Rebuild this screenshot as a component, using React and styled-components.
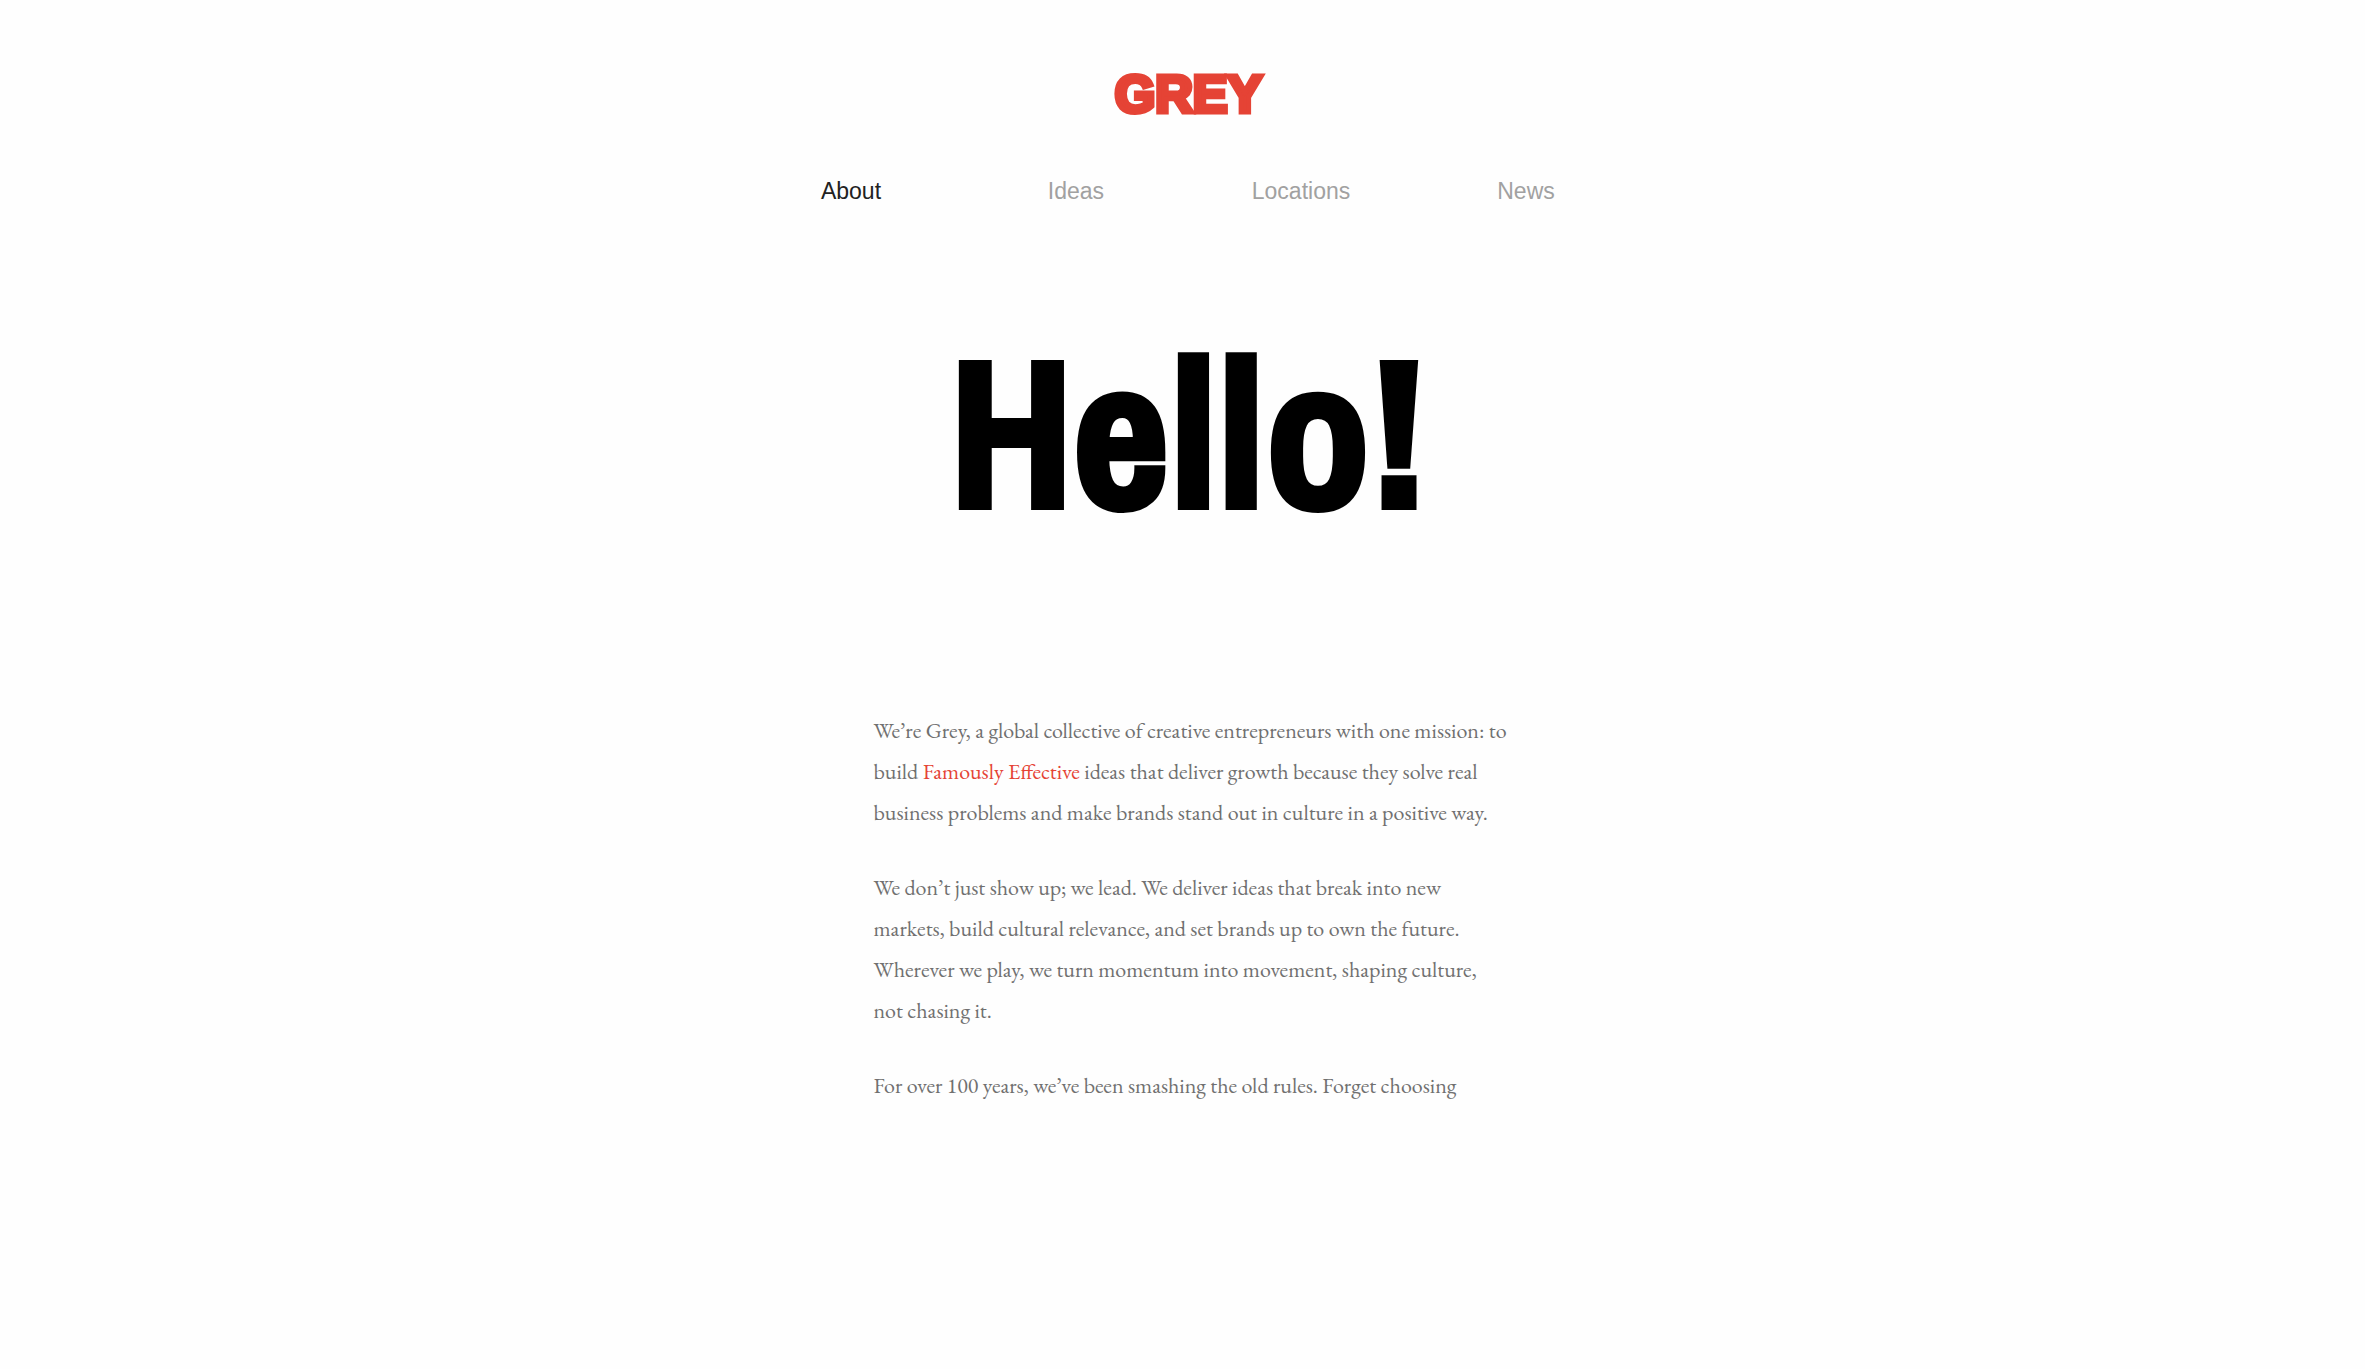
import React from 'react'
import styled, { createGlobalStyle } from 'styled-components'

const links = ['About', 'Ideas', 'Locations', 'News']

const App = () => {
  return (
    <Page>
      <GlobalStyle />

      <Header>
        <Logo href="#home">GREY</Logo>

        <Nav>
          {links.map((link) => (
            <NavLink key={link} href={`#${link.toLowerCase()}`} $active={link === 'About'}>
              {link}
            </NavLink>
          ))}
        </Nav>
      </Header>

      <main>
        <Hello>Hello!</Hello>

        <Copy>
          <p>
            We’re Grey, a global collective of creative entrepreneurs with one mission: to<br />
            build <a href="#famously-effective">Famously Effective</a> ideas that deliver growth because they solve real<br />
            business problems and make brands stand out in culture in a positive way.
          </p>
          <p>
            We don’t just show up; we lead. We deliver ideas that break into new<br />
            markets, build cultural relevance, and set brands up to own the future.<br />
            Wherever we play, we turn momentum into movement, shaping culture,<br />
            not chasing it.
          </p>
          <p>For over 100 years, we’ve been smashing the old rules. Forget choosing</p>
        </Copy>
      </main>
    </Page>
  )
}

export default App


const GlobalStyle = createGlobalStyle`
  body {
    margin: 0;
    background: #fefefe;
  }
`

const Page = styled.div`
  padding: 64px 0 80px 12px;
`

const Header = styled.header`
  display: flex;
  flex-direction: column;
  align-items: center;
`

const Logo = styled.a`
  font: bold 52px/60px 'Liberation Sans', Arial, sans-serif;
  -webkit-text-stroke: 5px #e54335;
  color: #e54335;
  text-decoration: none;
`

const Nav = styled.nav`
  display: grid;
  grid-template-columns: repeat(4, 1fr);
  width: 100%;
  max-width: 900px;
  margin-top: 52px;
`

const NavLink = styled.a`
  font: 23px/30px 'Liberation Sans', Arial, sans-serif;
  text-align: center;
  text-decoration: none;
  color: ${({ $active }) => ($active ? '#222' : '#a1a1a1')};
`

const Hello = styled.h1`
  margin: 106px 0 0;
  font: 900 210px/240px 'Archivo Narrow', 'Roboto Condensed', sans-serif;
  -webkit-text-stroke: 6px #000;
  text-align: center;
  color: #000;
`

const Copy = styled.div`
  max-width: 630px;
  margin: 158px auto 0;
  font: 22px/41px 'EB Garamond', 'Liberation Serif', serif;
  white-space: nowrap;
  color: #707070;

  p {
    margin: 0 0 34px;
  }

  a {
    color: #e54335;
    text-decoration: none;
  }
`
